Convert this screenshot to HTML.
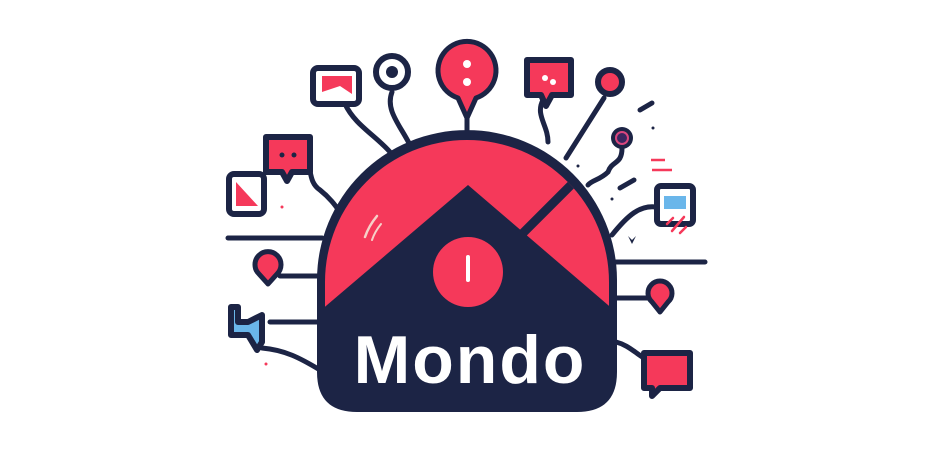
<!DOCTYPE html>
<html><head><meta charset="utf-8"><style>
html,body{margin:0;padding:0;background:#fff;width:930px;height:450px;overflow:hidden}
svg{display:block}
.t{font-family:"Liberation Sans",Arial,sans-serif;font-weight:bold}
</style></head><body>
<svg width="930" height="450" viewBox="0 0 930 450" xmlns="http://www.w3.org/2000/svg">
<defs>
<clipPath id="dome"><path d="M325 307 L325 282 A142 142 0 0 1 609 282 L609 307 Z"/></clipPath>
</defs>
<g fill="none" stroke="#1c2445" stroke-width="5" stroke-linecap="round">
<path d="M345 104 C355 125 375 135 390 152"/>
<path d="M392 92 C385 110 400 125 410 145"/>
<path d="M467 112 L467 130"/>
<path d="M543 100 C535 115 548 125 548 142"/>
<path d="M604 98 L566 158"/>
<path d="M622 148 C622 165 612 160 608 172 C600 180 592 180 588 185"/>
<path d="M656 207 C640 205 628 215 612 235"/>
<path d="M612 262 L705 262"/>
<path d="M648 298 L614 298"/>
<path d="M644 358 C634 352 628 345 616 342"/>
<path d="M228 238 L322 238"/>
<path d="M300 158 C315 160 305 180 320 190 C330 198 335 205 340 212"/>
<path d="M280 276 L322 276"/>
<path d="M270 322 L320 322"/>
<path d="M262 348 C285 350 300 358 320 370"/>
<path d="M640 110 L652 103"/>
<path d="M620 188 L634 180"/>
</g>
<path d="M317 280 A150 150 0 0 1 617 280 L617 372 Q617 412 577 412 L357 412 Q317 412 317 372 Z" fill="#1c2445"/>
<g clip-path="url(#dome)">
<rect x="320" y="135" width="295" height="175" fill="#f5395a"/>
<polygon points="468,185 320,311 615,311" fill="#1c2445"/>
<line x1="523" y1="233" x2="582" y2="174" stroke="#1c2445" stroke-width="9"/>
</g>
<path d="M365 237 C368 228 372 222 377 216" stroke="#f6d0c8" stroke-width="2.5" fill="none" stroke-linecap="round"/>
<path d="M372 240 C374 234 377 229 381 224" stroke="#f6d0c8" stroke-width="2" fill="none" stroke-linecap="round"/>
<circle cx="468" cy="272" r="35" fill="#f5395a"/>
<line x1="468" y1="257" x2="468" y2="280" stroke="#fff" stroke-width="4" stroke-linecap="round"/>
<text class="t" x="470" y="383" text-anchor="middle" font-size="68" letter-spacing="2" fill="#fff">Mondo</text>

<path d="M467 118 L458 98 A29 29 0 1 1 476 98 Z" fill="#f5395a" stroke="#1c2445" stroke-width="5" stroke-linejoin="round"/>
<circle cx="467" cy="64" r="4" fill="#fff"/><circle cx="467" cy="82" r="4" fill="#fff"/>
<circle cx="392" cy="72" r="16" fill="#fff" stroke="#1c2445" stroke-width="6"/>
<circle cx="392" cy="72" r="6" fill="#1c2445"/>
<rect x="313" y="68" width="46" height="36" rx="5" fill="#fff" stroke="#1c2445" stroke-width="6"/>
<path d="M322 76 L352 76 L352 94 L340 86 L322 92 Z" fill="#f5395a"/>
<path d="M527 60 L571 60 L571 95 L552 95 L546 106 L541 95 L527 95 Z" fill="#f5395a" stroke="#1c2445" stroke-width="6" stroke-linejoin="round"/>
<circle cx="545" cy="78" r="3" fill="#fff"/><circle cx="553" cy="82" r="3" fill="#fff"/>
<circle cx="610" cy="82" r="12" fill="#f5395a" stroke="#1c2445" stroke-width="6"/>
<circle cx="622" cy="138" r="11" fill="#1c2445"/>
<circle cx="622" cy="138" r="6" fill="#3a2660" stroke="#d9467e" stroke-width="2"/>
<line x1="651" y1="160" x2="665" y2="160" stroke="#f5395a" stroke-width="2.5"/>
<line x1="652" y1="170" x2="672" y2="170" stroke="#f5395a" stroke-width="2.5"/>
<rect x="657" y="186" width="36" height="38" rx="4" fill="#fff" stroke="#1c2445" stroke-width="6"/>
<rect x="664" y="196" width="22" height="13" fill="#6ab6ea"/>
<path d="M667 224 L673 218 M672 231 L684 217 M680 233 L686 227" stroke="#f5395a" stroke-width="2.5" stroke-linecap="round"/>
<path d="M660 312 L652 302 A12 12 0 1 1 668 302 Z" fill="#f5395a" stroke="#1c2445" stroke-width="5" stroke-linejoin="round"/>
<path d="M644 353 L690 353 L690 388 L660 388 L652 396 L652 388 L644 388 Z" fill="#f5395a" stroke="#1c2445" stroke-width="6" stroke-linejoin="round"/>
<path d="M266 137 L310 137 L310 172 L292 172 L287 181 L282 172 L266 172 Z" fill="#f5395a" stroke="#1c2445" stroke-width="6" stroke-linejoin="round"/>
<circle cx="282" cy="155" r="2.5" fill="#1c2445"/><circle cx="294" cy="155" r="2.5" fill="#1c2445"/>
<rect x="229" y="174" width="35" height="40" rx="5" fill="#fff" stroke="#1c2445" stroke-width="6"/>
<path d="M236 182 L258 206 L236 206 Z" fill="#f5395a"/>
<path d="M268 284 L259 274 A13 13 0 1 1 277 274 Z" fill="#f5395a" stroke="#1c2445" stroke-width="5" stroke-linejoin="round"/>
<path d="M231 307 L231 335 L248 335 L257 350 L262 342 L262 315 L248 322 L238 322 L238 307 Z" fill="#6ab6ea" stroke="#1c2445" stroke-width="6" stroke-linejoin="round"/>
<circle cx="326" cy="194" r="1.5" fill="#1c2445"/>
<circle cx="282" cy="207" r="1.5" fill="#f5395a"/>
<circle cx="266" cy="364" r="1.5" fill="#f5395a"/>
<circle cx="653" cy="128" r="1.5" fill="#1c2445"/>
<circle cx="578" cy="166" r="1.5" fill="#1c2445"/>
<circle cx="612" cy="199" r="1.5" fill="#1c2445"/>
<path d="M628 236 L632 244 L636 236 L632 240 Z" fill="#1c2445"/>
</svg>
</body></html>
